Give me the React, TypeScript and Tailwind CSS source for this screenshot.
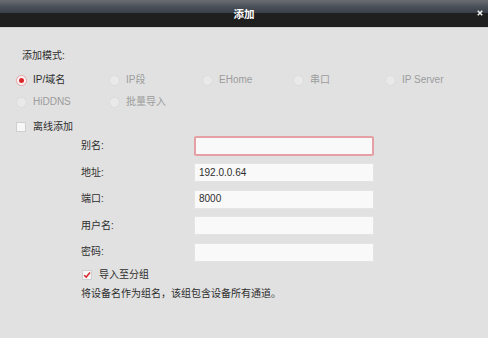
import type { ReactNode } from "react";

const FONT = "font-['Liberation_Sans','Noto_Sans_CJK_SC',sans-serif]";

/** Small round radio; only the first one on the page is checked. */
function Radio({ label, checked = false }: { label: string; checked?: boolean }) {
  return (
    <div className="flex h-4 items-center gap-[6px]">
      {checked ? (
        <span className="flex h-[11px] w-[11px] items-center justify-center rounded-full border border-[#e3a3a5] bg-[#fdf3f3]">
          <span className="h-[5px] w-[5px] rounded-full bg-[#d8262d]" />
        </span>
      ) : (
        <span className="h-[11px] w-[11px] rounded-full border border-[#dcdcdc] bg-[#e9e9e9]" />
      )}
      <span className={checked ? "text-[#2e2e2e]" : "text-[#9c9c9c]"}>{label}</span>
    </div>
  );
}

function Checkbox({ label, checked = false }: { label: string; checked?: boolean }) {
  return (
    <div className="flex h-4 items-center gap-[7px]">
      <span className="flex h-[10px] w-[10px] items-center justify-center border border-[#cfcfcf] bg-[#f7f7f7]">
        {checked ? (
          <svg viewBox="0 0 10 10" className="h-[10px] w-[10px]">
            <path d="M1.5 5.2 L4 7.6 L8.8 1.8" fill="none" stroke="#d8262d" strokeWidth="1.8" />
          </svg>
        ) : null}
      </span>
      <span className="text-[#2e2e2e]">{label}</span>
    </div>
  );
}

function Field({ label, children }: { label: string; children: ReactNode }) {
  return (
    <div className="flex h-[20px] items-center">
      <span className="w-[113px] text-[#2e2e2e]">{label}</span>
      {children}
    </div>
  );
}

function TextBox({ value = "", invalid = false }: { value?: string; invalid?: boolean }) {
  return (
    <div
      className={
        invalid
          ? "flex h-[20px] w-[180px] items-center rounded-[2px] border-2 border-[#e4a0a2] bg-[#f9f9f9] px-[3px] text-[#2e2e2e]"
          : "flex h-[19px] w-[180px] items-center border border-[#e4e4e4] bg-[#f9f9f9] px-[4px] text-[#2e2e2e]"
      }
    >
      {value}
    </div>
  );
}

export default function App() {
  return (
    <div className={`h-[338px] w-[488px] overflow-hidden bg-[#e1e1e1] text-[10px] leading-4 ${FONT}`}>
      <header className="relative flex h-[28px] items-center justify-center border-b border-[#cfcfcf] bg-[linear-gradient(to_bottom,#6a6e74_0px,#4a5058_7px,#383f48_13px,#1f1f1f_13px,#1e1e1e_27px)]">
        <span className="text-[10.5px] font-bold text-white">添加</span>
        <svg viewBox="0 0 8 8" className="absolute right-[5px] top-[10px] h-[6px] w-[6px]">
          <path d="M1 1 L7 7 M7 1 L1 7" stroke="#f2f2f2" strokeWidth="2" />
        </svg>
      </header>

      <div className="pt-[20px]">
        <p className="pl-[22px] text-[#2e2e2e]">添加模式:</p>

        <div className="mt-[8px] grid grid-cols-[93px_93px_91px_92px_auto] pl-[16px]">
          <Radio label="IP/域名" checked />
          <Radio label="IP段" />
          <Radio label="EHome" />
          <Radio label="串口" />
          <Radio label="IP Server" />
        </div>
        <div className="mt-[6px] grid grid-cols-[93px_auto] pl-[16px]">
          <Radio label="HiDDNS" />
          <Radio label="批量导入" />
        </div>

        <div className="mt-[9px] pl-[16px]">
          <Checkbox label="离线添加" />
        </div>

        <div className="mt-[1px] flex flex-col gap-[6.5px] pl-[81px]">
          <Field label="别名:">
            <TextBox invalid />
          </Field>
          <Field label="地址:">
            <TextBox value="192.0.0.64" />
          </Field>
          <Field label="端口:">
            <TextBox value="8000" />
          </Field>
          <Field label="用户名:">
            <TextBox />
          </Field>
          <Field label="密码:">
            <TextBox />
          </Field>
        </div>

        <div className="mt-[5px] pl-[82px]">
          <Checkbox label="导入至分组" checked />
        </div>
        <p className="mt-[3px] pl-[81px] text-[#2e2e2e]">将设备名作为组名，该组包含设备所有通道。</p>
      </div>
    </div>
  );
}
